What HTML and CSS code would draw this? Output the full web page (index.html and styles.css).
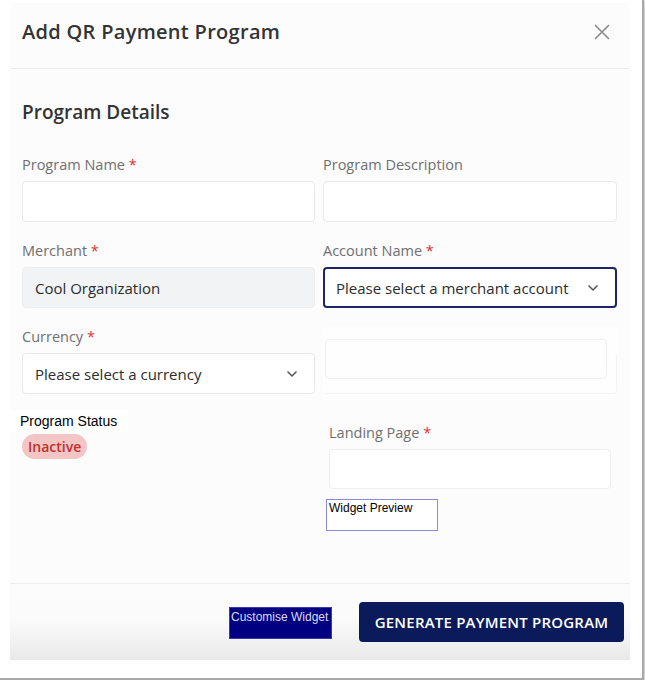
FILE: index.html
```
<!DOCTYPE html>
<html lang="en">
<head>
<meta charset="utf-8">
<title>Add QR Payment Program</title>
<link rel="stylesheet" href="styles.css">
</head>
<body>
<div class="frame">
  <div class="modal">
    <header class="modal-header">
      <h1 class="modal-title">Add QR Payment Program</h1>
      <button class="close-btn" aria-label="Close">
        <svg width="16" height="16" viewBox="0 0 16 16"><path d="M1 1L15 15M15 1L1 15" stroke="#8a8a8a" stroke-width="1.6" fill="none"/></svg>
      </button>
    </header>
    <section class="modal-body">
      <h2 class="section-title">Program Details</h2>
      <div class="grid">
        <div class="field">
          <label class="label">Program Name <span class="req">*</span></label>
          <div class="input"></div>
        </div>
        <div class="field">
          <label class="label">Program Description</label>
          <div class="input"></div>
        </div>
        <div class="field">
          <label class="label">Merchant <span class="req">*</span></label>
          <div class="input disabled">Cool Organization</div>
        </div>
        <div class="field">
          <label class="label">Account Name <span class="req">*</span></label>
          <div class="input select focused">Please select a merchant account
            <svg class="chev" width="12" height="8" viewBox="0 0 12 8"><path d="M1.5 1.5L6 6L10.5 1.5" stroke="#555" stroke-width="1.5" fill="none"/></svg>
          </div>
        </div>
        <div class="col">
          <div class="field">
            <label class="label">Currency <span class="req">*</span></label>
            <div class="input select">Please select a currency
              <svg class="chev" width="12" height="8" viewBox="0 0 12 8"><path d="M1.5 1.5L6 6L10.5 1.5" stroke="#555" stroke-width="1.5" fill="none"/></svg>
            </div>
          </div>
          <div class="status">
            <div class="status-label">Program Status</div>
            <span class="pill">Inactive</span>
          </div>
        </div>
        <div class="col">
          <div class="ghost">
            <div class="ghost-a"></div>
            <div class="ghost-b"></div>
          </div>
          <div class="field landing">
            <label class="label">Landing Page <span class="req">*</span></label>
            <div class="input"></div>
          </div>
          <div class="preview">Widget Preview</div>
        </div>
      </div>
    </section>
    <footer class="modal-footer">
      <button class="custom-btn">Customise Widget</button>
      <button class="primary-btn">GENERATE PAYMENT PROGRAM</button>
    </footer>
  </div>
</div>
</body>
</html>
```
FILE: styles.css
```
* { box-sizing: border-box; }
html, body { margin: 0; padding: 0; background: #fff; }
body { font-family: "Open Sans", "Liberation Sans", sans-serif; }

.frame {
  width: 644px;
  height: 680px;
  margin-left: 0;
  padding: 3px 12px 17px 10px;
  border-right: 2px solid #a9a9a9;
  border-bottom: 2px solid #a9a9a9;
  box-shadow: 1px 1px 2px rgba(0,0,0,0.25);
  background: #fff;
}

.modal {
  width: 620px;
  height: 657px;
  background: #fcfcfc;
  display: flex;
  flex-direction: column;
}

.modal-header {
  height: 66px;
  display: flex;
  align-items: center;
  justify-content: space-between;
  padding: 0 20px 8px 12px;
  border-bottom: 1px solid #ececec;
}
.modal-title {
  margin: 0;
  font-size: 20px;
  font-weight: 600;
  color: #333;
  letter-spacing: 0.3px;
}
.close-btn {
  border: 0;
  background: none;
  padding: 0;
  width: 16px;
  height: 16px;
  display: flex;
}

.modal-body {
  padding: 0 14px 0 12px;
  flex: 1;
  border-bottom: 1px solid #eeeeee;
}
.section-title {
  margin: 31px 0 31px;
  height: 24px;
  line-height: 24px;
  font-size: 19px;
  font-weight: 600;
  color: #333;
}

.grid {
  display: grid;
  grid-template-columns: 293px 294px;
  column-gap: 8px;
  row-gap: 19px;
}
.col { display: flex; flex-direction: column; }

.label {
  display: block;
  height: 20px;
  line-height: 20px;
  font-size: 14.5px;
  color: #6f6f6f;
  margin-bottom: 6px;
}
.req { color: #d33; }

.input {
  height: 41px;
  border: 1px solid #e9e9e9;
  border-radius: 4px;
  background: #fff;
  display: flex;
  align-items: center;
  padding: 0 12px;
  font-size: 15px;
  color: #2c2c2c;
}
.input.disabled { background: #f2f3f4; border-color: #eeeeee; }
.input.select { justify-content: space-between; padding-right: 16px; }
.input.focused { border: 2px solid #1c2566; padding-left: 11px; }
.chev { flex: none; }

.status {
  margin-top: 16px;
}
.status-label {
  margin-left: -12px;
  width: 118px;
  background: #fff;
  padding: 1px 0 1px 10px;
  font-family: "Liberation Sans", Arial, sans-serif;
  font-size: 14px;
  line-height: 20px;
  color: #000;
}
.pill {
  display: inline-block;
  margin-top: 2px;
  height: 25px;
  line-height: 25px;
  padding: 0 6px;
  border-radius: 13px;
  background: #f4c5c5;
  color: #c0302e;
  font-size: 14px;
  font-weight: 600;
}

.ghost {
  height: 70px;
  background: #fefefe;
  padding: 12px 10px 0 2px;
  position: relative;
}
.ghost-a {
  height: 40px;
  border: 1px solid #f0f0f0;
  border-radius: 4px;
}
.ghost-b {
  position: absolute;
  left: 0;
  right: 0;
  top: 26px;
  height: 41px;
  border: 1px solid #f3f3f3;
  border-left-color: transparent;
  border-top-color: transparent;
  border-radius: 4px;
}

.landing {
  margin: 26px 6px 0 6px;
}
.landing .input { height: 40px; border-color: #eeeeee; }

.preview {
  margin: 10px 0 0 3px;
  width: 112px;
  height: 32px;
  border: 1px solid #8a8ad6;
  background: #fff;
  font-family: "Liberation Sans", Arial, sans-serif;
  font-size: 12px;
  line-height: 15px;
  padding: 1px 2px;
  color: #000;
}

.modal-footer {
  height: 76px;
  display: flex;
  justify-content: flex-end;
  align-items: center;
  gap: 27px;
  padding: 0 6px 1px 0;
  background: linear-gradient(to bottom, #fcfcfc 0%, #fbfbfb 45%, #e9e9e9 100%);
}
.custom-btn {
  width: 103px;
  height: 32px;
  background: #000080;
  border: 1px solid #3a3ab0;
  color: #dcdcf0;
  font-family: "Liberation Sans", Arial, sans-serif;
  font-size: 12px;
  text-align: left;
  padding: 2px 0 0 1px;
  line-height: 15px;
  display: flex;
  align-items: flex-start;
  margin-top: 2px;
}
.primary-btn {
  width: 265px;
  height: 40px;
  background: #0b1a5a;
  border: 0;
  border-radius: 4px;
  color: #fff;
  font-family: "Open Sans", "Liberation Sans", sans-serif;
  font-size: 15px;
  font-weight: 600;
  letter-spacing: 0.2px;
}
```
